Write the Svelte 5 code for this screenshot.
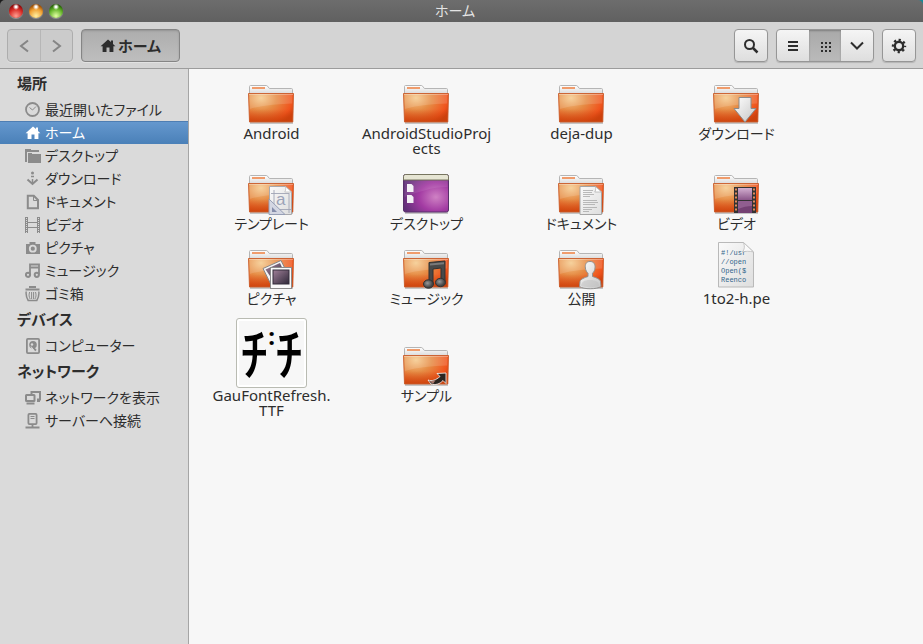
<script>
  let current = $state('home');
  let view = $state('grid');

  const sections = [
    {
      title: '場所',
      items: [
        { id: 'recent', label: '最近開いたファイル' },
        { id: 'home', label: 'ホーム' },
        { id: 'desktop', label: 'デスクトップ' },
        { id: 'download', label: 'ダウンロード' },
        { id: 'documents', label: 'ドキュメント' },
        { id: 'videos', label: 'ビデオ' },
        { id: 'pictures', label: 'ピクチャ' },
        { id: 'music', label: 'ミュージック' },
        { id: 'trash', label: 'ゴミ箱' }
      ]
    },
    {
      title: 'デバイス',
      items: [{ id: 'computer', label: 'コンピューター' }]
    },
    {
      title: 'ネットワーク',
      items: [
        { id: 'network', label: 'ネットワークを表示' },
        { id: 'server', label: 'サーバーへ接続' }
      ]
    }
  ];

  const files = [
    { name: 'Android', kind: 'folder' },
    { name: 'AndroidStudioProjects', kind: 'folder' },
    { name: 'deja-dup', kind: 'folder' },
    { name: 'ダウンロード', kind: 'folder', emblem: 'download' },
    { name: 'テンプレート', kind: 'folder', emblem: 'template' },
    { name: 'デスクトップ', kind: 'desktop' },
    { name: 'ドキュメント', kind: 'folder', emblem: 'document' },
    { name: 'ビデオ', kind: 'folder', emblem: 'video' },
    { name: 'ピクチャ', kind: 'folder', emblem: 'pictures' },
    { name: 'ミュージック', kind: 'folder', emblem: 'music' },
    { name: '公開', kind: 'folder', emblem: 'public' },
    { name: '1to2-h.pe', kind: 'text' },
    { name: 'GauFontRefresh.TTF', kind: 'font' },
    { name: 'サンプル', kind: 'folder', emblem: 'link' }
  ];

  // Let long names wrap before the extension
  function breakable(name) {
    return name.replace('.', '.\u200b');
  }

  function isJapanese(name) {
    return /[\u3000-\u9fff]/.test(name);
  }
</script>

{#snippet homeIcon()}
  <path d="M8 1.5 0.6 8.2h2V14h3.9v-4.4h3V14h3.9V8.2h2L13 5.9V2.6h-2v1.5z" fill="currentColor" />
{/snippet}

{#snippet placeIcon(id)}
  <svg class="place-icon" width="16" height="16" viewBox="0 0 16 16" fill="none" stroke="currentColor" aria-hidden="true">
    {#if id === 'recent'}
      <circle cx="7.5" cy="7.5" r="6.5" stroke-width="1.8" />
      <path d="m4.5 5.5 3 2.5 3.5-3.5" />
    {:else if id === 'home'}
      <g stroke="none">{@render homeIcon()}</g>
    {:else if id === 'desktop'}
      <path d="M0 1h6v1h8v2H2v10H0zM3 5h4v1h9v9H3z" fill="currentColor" stroke="none" />
    {:else if id === 'download'}
      <path d="m2.500 8.500 5 4.500 5-4.500" stroke-width="2" />
      <path d="M6 5.500h3M7.500 8v4" stroke-width="1.500" />
      <circle cx="7.500" cy="2" r="1.500" fill="currentColor" stroke="none" />
    {:else if id === 'documents'}
      <path d="M2.800 1.800h6L13 6v8.200H2.800z" stroke-width="2" />
      <path d="M8.500 2v4.500H13" />
    {:else if id === 'videos'}
      <path d="M1.500 0v16M13.500 0v16" stroke-width="3" />
      <path d="M1.500 1v15M13.500 1v15" stroke="#d9d9d9" stroke-dasharray="1 1" />
      <path d="M3 5.500h9M3 10.500h9" />
    {:else if id === 'pictures'}
      <path d="M1 4h3.500V2h6v2H15v10H1z" fill="currentColor" stroke="none" />
      <circle cx="7.800" cy="8.700" r="3" stroke="#dadada" stroke-width="1.800" />
    {:else if id === 'music'}
      <path d="M5 11.500v-10h9v10M5 4.500h9" stroke-width="1.800" />
      <circle cx="3" cy="11.800" r="2.100" stroke-width="2" />
      <circle cx="11.800" cy="11.800" r="2.100" stroke-width="2" />
    {:else if id === 'trash'}
      <path d="M4 1h7M0.500 3.500h14" stroke-width="2" />
      <path d="M1.200 5.500c-.4 3 .2 6 2 9h8.600c1.800-3 2.400-6 2-9" stroke-width="1.500" />
      <path d="M4.600 6c-.9 3-.6 5 .6 7M6.600 6v7M8.600 6v7M10.500 6c.9 3 .6 5-.6 7" />
    {:else if id === 'computer'}
      <rect x="1.900" y="0.900" width="12.200" height="14.200" rx="1" stroke-width="1.800" />
      <circle cx="8" cy="6.800" r="3.800" fill="currentColor" stroke="none" />
      <circle cx="7" cy="6.500" r="1.200" fill="#dadada" stroke="none" />
      <path d="m7.500 9 3.500 3.500" stroke-width="1.800" />
      <path d="m6 8.500 2.500 3.500" stroke="#dadada" />
    {:else if id === 'network'}
      <path d="M6.500 4V2h8.500v7.500h-3" stroke-width="2" />
      <rect x="1" y="5" width="8.500" height="6" rx=".5" stroke-width="2" />
      <path d="M1.500 13.500h8M12 11h3" stroke-width="2" />
    {:else if id === 'server'}
      <rect x="3.400" y="0.900" width="8.200" height="10.200" rx="1" stroke-width="1.800" />
      <path d="M5.500 3.500h4M5.500 5.500h4" />
      <path d="M7.500 11v4M0.500 14.500h14" stroke-width="1.800" />
    {/if}
  </svg>
{/snippet}

{#snippet emblemShape(emblem)}
  {#if emblem === 'download'}
    <path d="M26 19.500h12v11h5L32 44 21 30.500h5z" fill="url(#silver)" stroke="#8c8c8c" />
  {:else if emblem === 'template'}
    <path d="M21.500 18.500h16l6 5.500v22.500h-22z" fill="url(#paper)" stroke="#a9a9ad" />
    <path d="M37.500 18.500c.5 3 0 4.500-.8 5.500h6.800z" fill="#fff" stroke="#b5b5b8" stroke-width=".7" />
    <path d="M26 22v20M41 25v20M23 25.500h18M23 41.500h20" stroke="#a0a5b6" stroke-width=".9" />
    <text class="template-letter" x="28" y="37">a</text>
    <path d="M21 31v15.500h16z" fill="#d3d6e2" stroke="#969eb5" />
    <path d="M24 39v5h5z" fill="#858dab" />
  {:else if emblem === 'document'}
    <path d="M22 18.500h15.500l6 5.500v22.500H22z" fill="url(#paper)" stroke="#a5a5a5" />
    <path d="M37.500 18.500c.5 3 0 4.500-.8 5.500h6.800z" fill="#fff" stroke="#aaa" stroke-width=".7" />
    <path d="M25 22.500h10M25 24.500h9M25 26.500h11M25 28.500h7M25 32.500h14M25 34.500h15M25 36.500h12M25 39.500h14M25 41.500h9M25 43.500h6" stroke="#aaa" stroke-width=".8" />
  {:else if emblem === 'video'}
    <rect x="21" y="19" width="22" height="26" fill="#333" />
    <rect x="25" y="20" width="14" height="12" fill="url(#film)" />
    <rect x="25" y="33" width="14" height="12" fill="#744173" />
    <path d="M25 33h14v5c-5 0-9 1-14 3z" fill="#a371a2" opacity=".6" />
    <path d="M23 20.500v24M41 20.500v24" stroke="#e28a5c" stroke-width="2" stroke-dasharray="2 2" />
  {:else if emblem === 'pictures'}
    <path d="m15 25.500 18-8 8 16-17.500 9z" fill="#f4f4f4" stroke="#888" />
    <path d="m17.500 26.500 14.500-6.500 5.500 12-12 6z" fill="url(#photo)" />
    <rect x="22.500" y="24.500" width="21" height="21" fill="#fafafa" stroke="#8b8b8b" />
    <rect x="25" y="27" width="16" height="14" fill="url(#photo)" stroke="#332c3b" />
  {:else if emblem === 'music'}
    <path d="M26 41V19.500L42 18v21.500h-4V25l-8 1v15z" fill="#484848" stroke="#303030" />
    <path d="m27 20.500 14-1.200v2L27 22.500z" fill="#797979" />
    <ellipse cx="25.500" cy="41" rx="5" ry="4.200" fill="url(#noteHead)" stroke="#333" />
    <ellipse cx="37.500" cy="39.500" rx="5" ry="4.200" fill="url(#noteHead)" stroke="#333" />
  {:else if emblem === 'public'}
    <path d="M32 18.500c-4 0-5 3-4.600 6.500.3 2.500 1.300 4 2.600 5.200v3.300c-3 1-7.500 2.500-8 5l-.5 5c4 3 17.500 3 21.500 0l-.5-5c-.5-2.500-5-4-8-5v-3.300c1.300-1.200 2.300-2.700 2.500-5.200.4-3.500-1-6.500-5-6.500z" fill="url(#silver)" stroke="#929292" />
    <path d="M23 43c.5-4 3-6 9-6s9 2 9 6c-5 1.500-13 1.500-18 0z" fill="#bdbdbd" opacity=".5" />
  {:else if emblem === 'link'}
    <path d="m34 33.500 9-.5v10.500l-3-3c-3 3.500-8 5-12 3.500l-3-4c4 1.500 8 0 12-3.500z" fill="#2b2420" stroke="#fff" stroke-width=".8" />
    <path d="M26 40.500c3 1 5 .5 7-1L30 44z" fill="#a7786b" />
  {/if}
{/snippet}

<!-- Shared gradients -->
<svg class="defs" width="0" height="0" aria-hidden="true">
  <defs>
    <radialGradient id="folderFill" gradientUnits="userSpaceOnUse" cx="13" cy="20" r="37" gradientTransform="translate(0 4) scale(1 .8)">
      <stop offset="0" stop-color="#f5ca8d" />
      <stop offset=".42" stop-color="#e68c45" />
      <stop offset=".85" stop-color="#f0541d" />
      <stop offset="1" stop-color="#d4410f" />
    </radialGradient>
    <linearGradient id="folderShade" x1="0" y1="0" x2="0" y2="1">
      <stop offset=".55" stop-color="#c6410a" stop-opacity="0" />
      <stop offset="1" stop-color="#c6410a" stop-opacity=".8" />
    </linearGradient>
    <linearGradient id="tabFill" x1="0" y1="0" x2="0" y2="1">
      <stop offset="0" stop-color="#fff" />
      <stop offset="1" stop-color="#d5d5d5" />
    </linearGradient>
    <linearGradient id="silver" x1="0" y1="0" x2="1" y2="1">
      <stop offset="0" stop-color="#fff" />
      <stop offset="1" stop-color="#c5c5c5" />
    </linearGradient>
    <linearGradient id="paper" x1="0" y1="0" x2="1" y2="1">
      <stop offset="0" stop-color="#fafafa" />
      <stop offset="1" stop-color="#dedede" />
    </linearGradient>
    <linearGradient id="film" x1="0" y1="0" x2="0" y2="1">
      <stop offset="0" stop-color="#d3afd0" />
      <stop offset="1" stop-color="#8a5589" />
    </linearGradient>
    <linearGradient id="photo" x1="0" y1="0" x2="1" y2="1">
      <stop offset="0" stop-color="#a08098" />
      <stop offset="1" stop-color="#2e2838" />
    </linearGradient>
    <radialGradient id="noteHead" cx=".4" cy=".4">
      <stop offset="0" stop-color="#999" />
      <stop offset="1" stop-color="#444" />
    </radialGradient>
    <radialGradient id="desktopFill" cx=".72" cy=".6" r=".75">
      <stop offset="0" stop-color="#cf82c4" />
      <stop offset=".5" stop-color="#a33ba3" />
      <stop offset="1" stop-color="#603078" />
    </radialGradient>
  </defs>
</svg>

<div class="window">
  <div class="titlebar-wrap">
    <header class="titlebar">
      <div class="lights">
        <button class="light close" aria-label="閉じる"></button>
        <button class="light minimize" aria-label="最小化"></button>
        <button class="light maximize" aria-label="最大化"></button>
      </div>
      <h1>ホーム</h1>
    </header>
  </div>

  <div class="toolbar">
    <div class="group nav-group">
      <button class="tool" disabled aria-label="戻る">
        <svg width="16" height="16" viewBox="0 0 16 16" fill="none" stroke="currentColor" stroke-width="2"><path d="M12 2.500 5 8l7 5.500" /></svg>
      </button>
      <button class="tool" disabled aria-label="進む">
        <svg width="16" height="16" viewBox="0 0 16 16" fill="none" stroke="currentColor" stroke-width="2"><path d="M4 2.500 11 8l-7 5.500" /></svg>
      </button>
    </div>

    <button class="path-btn">
      <svg width="16" height="16" viewBox="0 0 16 16" aria-hidden="true">{@render homeIcon()}</svg>
      ホーム
    </button>

    <div class="group search-group">
      <button class="tool" aria-label="検索">
        <svg width="16" height="16" viewBox="0 0 16 16" fill="none" stroke="currentColor"><circle cx="6.500" cy="6.500" r="4.500" stroke-width="2" /><path d="m10 10 4.500 4.500" stroke-width="2.500" /></svg>
      </button>
    </div>

    <div class="group view-group">
      <button class="tool" class:active={view === 'list'} aria-label="リスト表示" onclick={() => (view = 'list')}>
        <svg width="16" height="16" viewBox="0 0 16 16" stroke="currentColor" stroke-width="2"><path d="M3 4h10M3 8h10M3 12h10" /></svg>
      </button>
      <button class="tool" class:active={view === 'grid'} aria-label="アイコン表示" onclick={() => (view = 'grid')}>
        <svg width="16" height="16" viewBox="0 0 16 16" stroke="currentColor" stroke-width="2" stroke-dasharray="2 2"><path d="M4 5h10M4 9h10M4 13h10" /></svg>
      </button>
      <button class="tool" aria-label="表示オプション">
        <svg width="16" height="16" viewBox="0 0 16 16" fill="none" stroke="currentColor" stroke-width="2"><path d="m2 4.500 6 6 6-6" /></svg>
      </button>
    </div>

    <div class="group">
      <button class="tool" aria-label="設定">
        <svg width="16" height="16" viewBox="0 0 16 16" fill="none" stroke="currentColor">
          <circle cx="8" cy="8" r="4.200" stroke-width="2.400" />
          <circle cx="8" cy="8" r="6" stroke-width="2.400" stroke-dasharray="2.200 2.512" stroke-dashoffset="1.100" />
        </svg>
      </button>
    </div>
  </div>

  <div class="body">
    <nav class="sidebar">
      {#each sections as section}
        <h2>{section.title}</h2>
        <ul>
          {#each section.items as item}
            <li>
              <a href="#{item.id}" class:selected={current === item.id} onclick={() => (current = item.id)}>
                {@render placeIcon(item.id)}
                <span>{item.label}</span>
              </a>
            </li>
          {/each}
        </ul>
      {/each}
    </nav>

    <main class="files">
      {#each files as file}
        <button class="file">
          <span class="icon">
            {#if file.kind === 'font'}
              <span class="thumb"><span>ﾁ</span><span class="dots">:</span><span>ﾁ</span></span>
            {:else}
              <svg width="47" height="48" viewBox="0 0 47 48" fill="none" aria-hidden="true">
                {#if file.kind === 'folder'}
                  <path d="M2 45h43" stroke="#000" stroke-opacity=".2" stroke-width="2" />
                  <path d="M1.500 17V8.500c0-.6.4-1 1-1h15.800c.6 0 1 .3 1.300.7l1.800 2.300h22.100c.6 0 1 .4 1 1V17z" fill="url(#tabFill)" stroke="#b5b5b5" />
                  <path d="M4 10h13" stroke="#f09c6c" stroke-width="2" />
                  <path d="M.5 15.500h45l-.7 28.500H1.500z" fill="url(#folderFill)" />
                  <path d="M.5 15.500h45l-.7 28.500H1.500z" fill="url(#folderShade)" stroke="#ca5b2a" stroke-width=".9" />
                  <path d="M1.500 16.500h43l-.3 9C30 26 15 27 1.800 31z" fill="#fff" opacity=".14" />
                  <path d="M1 16.500h44" stroke="#fff" stroke-opacity=".35" />
                  {@render emblemShape(file.emblem)}
                {:else if file.kind === 'desktop'}
                  <path d="M2 45h43" stroke="#000" stroke-opacity=".2" stroke-width="2" />
                  <rect x=".5" y="6.500" width="45" height="37.500" rx="2" fill="url(#desktopFill)" stroke="#58306a" />
                  <path d="M.5 12V8.500c0-1 .8-2 2-2h41c1.200 0 2 1 2 2V12z" fill="#e6e5d3" stroke="#77755f" />
                  <path d="M4 16h4.500l2 2v6H4zM4 27h4.500l2 2v6H4z" fill="#f2f0f4" />
                  <path d="M1.500 13h43v6C29 19 15 24 1.500 29z" fill="#fff" opacity=".09" />
                {:else}
                  <path d="M5.500-.500h25l10 9.500v35h-35z" fill="url(#paper)" stroke="#b9b9b9" />
                  <g class="code">
                    <text x="8" y="12">#!/usr</text>
                    <text x="8" y="21">//open</text>
                    <text x="8" y="30">Open($</text>
                    <text x="8" y="39">Reenco</text>
                  </g>
                  <path d="M30.500-.500c1.500 4 1 7-1 9.500 3-1 7-1 11 0z" fill="#fafafa" stroke="#bbb" stroke-width=".8" />
                {/if}
              </svg>
            {/if}
          </span>
          <span class="name" class:kana={isJapanese(file.name)}>{breakable(file.name)}</span>
        </button>
      {/each}
    </main>
  </div>
</div>

<style>
  :global(body) {
    background: #f7f7f7;
  }
  .defs {
    position: absolute;
  }
  .window {
    display: flex;
    flex-direction: column;
    min-height: 100vh;
    font-family: 'Noto Sans', 'Noto Sans CJK JP', sans-serif;
    font-size: 15px;
    font-feature-settings: 'palt';
    color: #2d2d2d;
  }
  button {
    font: inherit;
    font-feature-settings: inherit;
    color: inherit;
    padding: 0;
    border: none;
    background: none;
  }
  h1,
  h2,
  ul {
    margin: 0;
    padding: 0;
  }

  /* Title bar */
  .titlebar-wrap {
    background: linear-gradient(90deg, #1c1c1c 50%, #16899a 50%);
  }
  .titlebar {
    display: grid;
    grid-template-columns: 1fr auto 1fr;
    align-items: center;
    height: 22px;
    padding: 0 22px 0 9px;
    border-radius: 5px 5px 0 0;
    background: linear-gradient(#6d6d6d, #606060);
  }
  .titlebar h1 {
    font-size: 14px;
    line-height: 20px;
    font-weight: 400;
    color: #e4e4e4;
  }
  .lights {
    display: flex;
    gap: 6px;
  }
  .light {
    width: 14px;
    height: 14px;
    border-radius: 50%;
    box-shadow: 0 1px 1px #999;
  }
  .close {
    background: radial-gradient(circle at 50% 20%, #fff 0 6%, transparent 24%), radial-gradient(circle at 50% 85%, #ff9d90, #d92c27 50%, #8b0a0a 78%);
  }
  .minimize {
    background: radial-gradient(circle at 50% 20%, #fff 0 6%, transparent 24%), radial-gradient(circle at 50% 85%, #fff0a0, #ef9f32 50%, #9a4f06 78%);
  }
  .maximize {
    background: radial-gradient(circle at 50% 20%, #fff 0 6%, transparent 24%), radial-gradient(circle at 50% 85%, #e2ffa2, #65b52b 50%, #286408 78%);
  }

  /* Toolbar */
  .toolbar {
    display: flex;
    align-items: center;
    gap: 8px;
    padding: 7px 7px 6px;
    background: #d4d4d4;
    border-bottom: 1px solid #9c9c9c;
  }
  .group {
    display: flex;
    box-sizing: border-box;
    height: 33px;
    border: 1px solid #969696;
    border-radius: 4px;
    background: linear-gradient(#f5f5f5, #dedede);
    box-shadow: 0 1px 1px rgba(0, 0, 0, 0.15);
  }
  .tool {
    display: flex;
    align-items: center;
    justify-content: center;
    width: 32px;
  }
  .tool.active {
    background: linear-gradient(#a9a9a9, #bababa);
    box-shadow: inset 0 1px 2px rgba(0, 0, 0, 0.25);
  }
  .nav-group {
    border-color: #adadad;
    background: #cbcbcb;
    box-shadow: 0 1px 0 #dedede;
    color: #858585;
  }
  .nav-group .tool + .tool {
    border-left: 1px solid #b6b6b6;
  }
  .search-group {
    margin-left: auto;
  }
  .path-btn {
    display: flex;
    align-items: center;
    justify-content: center;
    gap: 2px;
    box-sizing: border-box;
    width: 99px;
    height: 33px;
    border: 1px solid #858585;
    border-radius: 4px;
    background: linear-gradient(#adadad, #bebebe);
    box-shadow: inset 0 1px 2px rgba(0, 0, 0, 0.15), 0 1px 0 #e2e2e2;
    font-size: 15px;
    font-weight: 700;
  }

  /* Sidebar */
  .body {
    display: flex;
    flex: 1;
  }
  .sidebar {
    box-sizing: border-box;
    flex: 0 0 189px;
    background: #dadada;
    border-right: 1px solid #a5a5a5;
  }
  .sidebar h2 {
    padding-left: 17px;
    font-size: 15px;
    line-height: 29px;
    font-weight: 700;
  }
  .sidebar ul {
    list-style: none;
  }
  .sidebar a {
    display: flex;
    align-items: center;
    gap: 4px;
    height: 23px;
    padding-left: 25px;
    font-size: 14px;
    line-height: 23px;
    white-space: nowrap;
    color: inherit;
    text-decoration: none;
  }
  .place-icon {
    flex: none;
    color: #8b8b8b;
  }
  .sidebar a.selected {
    background: linear-gradient(#6699cf, #4a80b8);
    box-shadow: inset 0 1px 0 #4e7eb3;
    color: #fff;
  }
  .selected .place-icon {
    color: #fff;
  }

  /* Files */
  .files {
    flex: 1;
    display: grid;
    grid-template-columns: repeat(auto-fill, 155px);
    align-content: start;
    padding: 9px 0 0 5px;
    background: #f7f7f7;
  }
  .file {
    display: grid;
    grid-row: span 2;
    grid-template-rows: subgrid;
    justify-items: center;
    margin-bottom: 12px;
  }
  .icon {
    align-self: end;
    display: flex;
  }
  .icon svg {
    overflow: visible;
  }
  .name {
    align-self: start;
    width: 131px;
    line-height: 15px;
    overflow-wrap: anywhere;
  }
  .name.kana {
    font-size: 14px;
  }
  .thumb {
    display: flex;
    align-items: center;
    justify-content: center;
    box-sizing: border-box;
    width: 71px;
    height: 70px;
    border: 1px solid #b9bbb2;
    border-radius: 3px;
    background: #f7f7f7;
    box-shadow: inset 0 0 0 2px #fff;
    font-size: 56px;
    line-height: 60px;
    font-weight: 500;
    color: #000;
  }
  .dots {
    align-self: flex-start;
    font-size: 24px;
    line-height: 34px;
    font-weight: 700;
  }
  .code {
    font-family: 'Liberation Mono', monospace;
    font-size: 7px;
    fill: #31658a;
  }
  .template-letter {
    font-family: 'Liberation Sans', sans-serif;
    font-size: 17px;
    fill: #9ba2b8;
  }
</style>
